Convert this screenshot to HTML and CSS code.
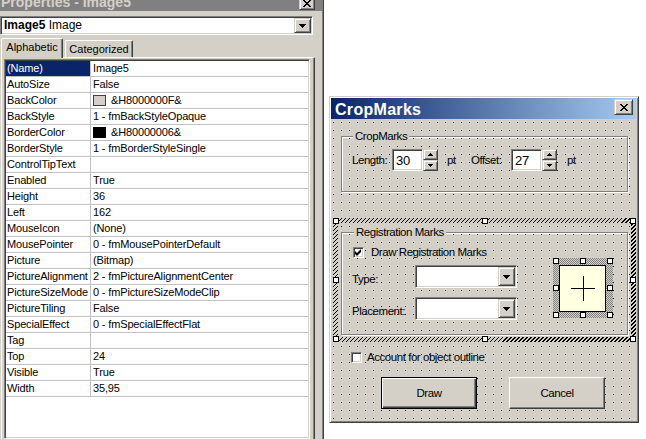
FILE: index.html
```html
<!DOCTYPE html>
<html>
<head>
<meta charset="utf-8">
<title>Properties - CropMarks</title>
<link rel="stylesheet" href="styles.css">
</head>
<body>
<div class="props">
  <div class="ptitle">
    <span class="ptitle-text">Properties - Image5</span>
    <span class="xbtn xsmall raised"><svg width="8" height="7" viewBox="0 0 8 7"><path d="M0 0h2v1H0zM6 0h2v1H6zM1 1h2v1H1zM5 1h2v1H5zM2 2h4v1H2zM3 3h2v1H3zM2 4h4v1H2zM1 5h2v1H1zM5 5h2v1H5zM0 6h2v1H0zM6 6h2v1H6z" fill="#000"/></svg></span>
  </div>
  <div class="pcombo sunken">
    <span class="pcombo-text"><b>Image5</b> Image</span>
    <span class="ddbtn raised"><svg width="7" height="4" viewBox="0 0 7 4"><path d="M0 0h7v1H6v1H5v1H4v1H3V3H2V2H1V1H0z" fill="#000"/></svg></span>
  </div>
  <div class="tabs">
    <div class="tab active">Alphabetic</div>
    <div class="tab">Categorized</div>
  </div>
  <div class="page">
    <div class="grid sunken">
      <div class="row cur"><div class="k">(Name)</div><div class="v">Image5</div></div>
      <div class="row"><div class="k">AutoSize</div><div class="v">False</div></div>
      <div class="row"><div class="k">BackColor</div><div class="v"><span class="sw sw-face"></span>&amp;H8000000F&amp;</div></div>
      <div class="row"><div class="k">BackStyle</div><div class="v">1 - fmBackStyleOpaque</div></div>
      <div class="row"><div class="k">BorderColor</div><div class="v"><span class="sw sw-black"></span>&amp;H80000006&amp;</div></div>
      <div class="row"><div class="k">BorderStyle</div><div class="v">1 - fmBorderStyleSingle</div></div>
      <div class="row"><div class="k">ControlTipText</div><div class="v"></div></div>
      <div class="row"><div class="k">Enabled</div><div class="v">True</div></div>
      <div class="row"><div class="k">Height</div><div class="v">36</div></div>
      <div class="row"><div class="k">Left</div><div class="v">162</div></div>
      <div class="row"><div class="k">MouseIcon</div><div class="v">(None)</div></div>
      <div class="row"><div class="k">MousePointer</div><div class="v">0 - fmMousePointerDefault</div></div>
      <div class="row"><div class="k">Picture</div><div class="v">(Bitmap)</div></div>
      <div class="row"><div class="k">PictureAlignment</div><div class="v">2 - fmPictureAlignmentCenter</div></div>
      <div class="row"><div class="k">PictureSizeMode</div><div class="v">0 - fmPictureSizeModeClip</div></div>
      <div class="row"><div class="k">PictureTiling</div><div class="v">False</div></div>
      <div class="row"><div class="k">SpecialEffect</div><div class="v">0 - fmSpecialEffectFlat</div></div>
      <div class="row"><div class="k">Tag</div><div class="v"></div></div>
      <div class="row"><div class="k">Top</div><div class="v">24</div></div>
      <div class="row"><div class="k">Visible</div><div class="v">True</div></div>
      <div class="row"><div class="k">Width</div><div class="v">35,95</div></div>
    </div>
  </div>
</div>

<div class="desk">
  <div class="win">
    <div class="wtitle">
      <span class="wtitle-text">CropMarks</span>
      <span class="xbtn xbig raised"><svg width="8" height="7" viewBox="0 0 8 7"><path d="M0 0h2v1H0zM6 0h2v1H6zM1 1h2v1H1zM5 1h2v1H5zM2 2h4v1H2zM3 3h2v1H3zM2 4h4v1H2zM1 5h2v1H1zM5 5h2v1H5zM0 6h2v1H0zM6 6h2v1H6z" fill="#000"/></svg></span>
    </div>
    <div class="client dots">
      <fieldset class="frame f1">
        <legend>CropMarks</legend>
        <div class="f1row">
          <span class="lbl w40">Length:</span>
          <span class="tb sunken">30</span>
          <span class="spin">
            <span class="sb raised"><svg width="5" height="3" viewBox="0 0 5 3"><path d="M2 0h1v1h1v1h1v1H0V2h1V1h1z" fill="#000"/></svg></span>
            <span class="sb raised"><svg width="5" height="3" viewBox="0 0 5 3"><path d="M0 0h5v1H4v1H3v1H2V2H1V1H0z" fill="#000"/></svg></span>
          </span>
          <span class="lbl pt1">pt</span>
          <span class="lbl w40">Offset:</span>
          <span class="tb sunken">27</span>
          <span class="spin">
            <span class="sb raised"><svg width="5" height="3" viewBox="0 0 5 3"><path d="M2 0h1v1h1v1h1v1H0V2h1V1h1z" fill="#000"/></svg></span>
            <span class="sb raised"><svg width="5" height="3" viewBox="0 0 5 3"><path d="M0 0h5v1H4v1H3v1H2V2H1V1H0z" fill="#000"/></svg></span>
          </span>
          <span class="lbl pt2">pt</span>
        </div>
      </fieldset>

      <div class="selbox">
        <div class="selin dots">
          <fieldset class="frame f2">
            <legend>Registration Marks</legend>
            <div class="f2body">
              <div class="f2left">
                <div class="chkrow">
                  <span class="chk sunken"><svg width="7" height="7" viewBox="0 0 7 7"><path d="M6 0v3L2 7 0 5V2l2 2z" fill="#000"/></svg></span>
                  <span class="chklbl">Draw Registration Marks</span>
                </div>
                <div class="frow r1">
                  <span class="lbl2">Type:</span>
                  <span class="fcombo sunken"><span class="ddbtn raised"><svg width="7" height="4" viewBox="0 0 7 4"><path d="M0 0h7v1H6v1H5v1H4v1H3V3H2V2H1V1H0z" fill="#000"/></svg></span></span>
                </div>
                <div class="frow r2">
                  <span class="lbl2">Placement:</span>
                  <span class="fcombo sunken"><span class="ddbtn raised"><svg width="7" height="4" viewBox="0 0 7 4"><path d="M0 0h7v1H6v1H5v1H4v1H3V3H2V2H1V1H0z" fill="#000"/></svg></span></span>
                </div>
              </div>
              <div class="imgsel">
                <div class="imgbox">
                  <svg width="24" height="25" viewBox="0 0 24 25"><path d="M0 12.5h24M12.5 0v25" stroke="#000" stroke-width="1"/></svg>
                </div>
                <span class="h i1"></span><span class="h i2"></span><span class="h i3"></span>
                <span class="h i4"></span><span class="h i5"></span>
                <span class="h i6"></span><span class="h i7"></span><span class="h i8"></span>
              </div>
            </div>
          </fieldset>
        </div>
        <span class="h s1"></span><span class="h s2"></span><span class="h s3"></span>
        <span class="h s4"></span><span class="h s5"></span>
        <span class="h s6"></span><span class="h s7"></span><span class="h s8"></span>
      </div>

      <div class="acct">
        <span class="chk sunken"></span>
        <span class="acctlbl">Account for object outline</span>
      </div>

      <div class="btns">
        <div class="btn def">Draw</div>
        <div class="btn normal">Cancel</div>
      </div>
    </div>
  </div>
</div>
</body>
</html>
```

FILE: styles.css
```css
* { box-sizing: border-box; }
html, body { margin: 0; padding: 0; }
body {
  width: 646px;
  height: 439px;
  overflow: hidden;
  background: #fff;
  display: flex;
  align-items: flex-start;
  font-family: "Liberation Sans", Arial, sans-serif;
  font-size: 11px;
  color: #000;
}

/* generic 3D looks */
.raised {
  background: #d4d0c8;
  border: 1px solid;
  border-color: #d4d0c8 #404040 #404040 #d4d0c8;
  box-shadow: inset 1px 1px #fff, inset -1px -1px #808080;
}
.sunken {
  background: #fff;
  border: 1px solid;
  border-color: #808080 #fff #fff #808080;
  box-shadow: inset 1px 1px #404040, inset -1px -1px #d4d0c8;
}
.dots {
  background-color: #d4d0c8;
  background-image: conic-gradient(from 90deg at 1px 1px, transparent 50%, #000 0 75%, transparent 0);
  background-size: 8px 8px;
  background-position: 5px 2px;
  background-attachment: fixed;
}

/* ---------- Properties window ---------- */
.props {
  flex: none;
  width: 324px;
  height: 439px;
  background: #d4d0c8;
  border-right: 1px solid #404040;
  box-shadow: inset -1px 0 #808080;
  display: flex;
  flex-direction: column;
}
.ptitle {
  flex: none;
  height: 18px;
  margin: -7px 1px 0 0;
  padding-left: 1px;
  background: #808080;
  color: #d4d0c8;
  font-weight: bold;
  font-size: 14px;
  line-height: 19px;
  display: flex;
  justify-content: space-between;
  align-items: flex-start;
  white-space: nowrap;
}
.xbtn {
  display: flex;
  align-items: center;
  justify-content: center;
  flex: none;
}
.xsmall { width: 16px; height: 14px; margin: 3px 7px 0 0; }
.xbig { width: 19px; height: 16px; margin: 1px 3px 0 0; }

.pcombo {
  flex: none;
  margin-top: 5px;
  width: 313px;
  height: 19px;
  padding: 1px;
  display: flex;
  justify-content: space-between;
}
.pcombo-text { padding-left: 2px; font-size: 12px; line-height: 15px; white-space: nowrap; }
.ddbtn {
  width: 17px;
  flex: none;
  display: flex;
  align-items: center;
  justify-content: center;
}

.tabs {
  flex: none;
  display: flex;
  align-items: flex-end;
  height: 19px;
  margin: 3px 0 0 1px;
  position: relative;
  z-index: 1;
}
.tab {
  width: 68px;
  height: 17px;
  margin-left: 2px;
  background: #d4d0c8;
  border: 1px solid;
  border-bottom: 0;
  border-color: #fff #404040 #fff #fff;
  box-shadow: inset -1px 0 #808080;
  border-radius: 2px 2px 0 0;
  text-align: center;
  line-height: 16px;
}
.tab.active {
  width: 62px;
  height: 20px;
  margin: 0 0 -1px 0;
}

.page {
  flex: 1;
  min-height: 0;
  width: 314px;
  margin-left: 1px;
  border-top: 1px solid #fff;
  border-left: 1px solid #fff;
  border-right: 1px solid #404040;
  box-shadow: inset -1px 0 #808080;
  padding: 1px 0 0 2px;
  display: flex;
  flex-direction: column;
}
.grid {
  flex: 1;
  width: 306px;
  padding: 1px;
  letter-spacing: -0.15px;
}
.row {
  display: flex;
  height: 16px;
  border-bottom: 1px solid #c0c0c0;
  line-height: 15px;
  white-space: nowrap;
}
.k {
  width: 85px;
  flex: none;
  border-right: 1px solid #c0c0c0;
  padding-left: 1px;
  overflow: hidden;
}
.v {
  flex: 1;
  padding-left: 2px;
  display: flex;
  align-items: center;
  overflow: hidden;
}
.row.cur .k { background: #0a246a; color: #fff; }
.sw {
  flex: none;
  width: 13px;
  height: 11px;
  border: 1px solid #000;
  margin-right: 5px;
}
.sw-face { background: #d4d0c8; border-color: #404040; }
.sw-black { background: #000; }

/* ---------- CropMarks form ---------- */
.desk { flex: none; padding: 96px 0 0 5px; }
.win {
  width: 310px;
  height: 327px;
  background: #d4d0c8;
  border: 1px solid;
  border-color: #d4d0c8 #404040 #404040 #d4d0c8;
  box-shadow: inset 1px 1px #fff, inset -1px -1px #808080;
  padding: 1px 2px 2px 1px;
  display: flex;
  flex-direction: column;
}
.wtitle {
  flex: none;
  height: 21px;
  padding: 2px 0 0 4px;
  background: linear-gradient(to right, #0a246a, #a6caf0);
  color: #fff;
  font-weight: bold;
  font-size: 16px;
  letter-spacing: 0.3px;
  line-height: 19px;
  display: flex;
  justify-content: space-between;
  align-items: flex-start;
}
.wtitle .xbig { margin-top: -1px; }

.client {
  height: 301px;
  display: flex;
  flex-direction: column;
  align-items: flex-start;
  font-family: "Liberation Sans", Arial, sans-serif;
  font-size: 11.5px;
  letter-spacing: -0.45px;
}

.frame {
  margin: 0;
  padding: 0;
  min-inline-size: 0;
  width: 287px;
  border: 1px solid #808080;
  box-shadow: 1px 1px #fff, inset 1px 1px #fff;
  background: transparent;
}
.frame legend {
  padding: 0 2px;
  line-height: 13px;
  background: #d4d0c8;
  white-space: nowrap;
}
.f1 { margin: 11px 0 0 10px; height: 62px; }
.f1 legend { margin-left: 11px; }
.f2 { margin: 3px 0 0 3px; height: 109px; }
.f2 legend { margin-left: 12px; }

.f1row {
  display: flex;
  align-items: center;
  height: 22px;
  margin: 6px 0 0 10px;
}
.lbl { flex: none; white-space: nowrap; }
.w40 { width: 40px; }
.pt1 { width: 24px; margin-left: 9px; }
.pt2 { margin-left: 10px; }
.tb {
  flex: none;
  width: 31px;
  height: 22px;
  padding: 1px 3px;
  font-size: 13px;
  letter-spacing: -0.2px;
  line-height: 19px;
}
.spin {
  flex: none;
  width: 15px;
  height: 22px;
  display: flex;
  flex-direction: column;
}
.sb {
  flex: 1;
  display: flex;
  align-items: center;
  justify-content: center;
}

.selbox {
  position: relative;
  margin: 26px 0 0 2px;
  width: 303px;
  height: 124px;
  padding: 5px;
  background: repeating-linear-gradient(135deg, #000 0 1.3px, #d4d0c8 1.3px 2.83px);
}
.selin {
  height: 100%;
  display: flex;
  align-items: flex-start;
}
.h {
  position: absolute;
  width: 6px;
  height: 6px;
  background: #fff;
  border: 1px solid #000;
}
.s1 { left: 0; top: 0; }
.s2 { left: 149px; top: 0; }
.s3 { left: 297px; top: 0; }
.s4 { left: 0; top: 59px; }
.s5 { left: 297px; top: 59px; }
.s6 { left: 0; top: 118px; }
.s7 { left: 149px; top: 118px; }
.s8 { left: 297px; top: 118px; }

.f2body { display: flex; align-items: flex-start; }
.f2left { width: 165px; margin: 8px 0 0 10px; flex: none; }
.chkrow { display: flex; align-items: center; height: 11px; margin-left: 1px; }
.chk {
  flex: none;
  width: 11px;
  height: 11px;
  display: flex;
  align-items: center;
  justify-content: center;
}
.chklbl { margin-left: 7px; white-space: nowrap; line-height: 11px; }
.frow { display: flex; align-items: flex-start; height: 23px; }
.r1 { margin-top: 7px; }
.r2 { margin-top: 9px; }
.lbl2 {
  width: 63px;
  height: 23px;
  flex: none;
  padding-top: 3px;
  line-height: 23px;
  white-space: nowrap;
}
.fcombo {
  width: 102px;
  height: 23px;
  padding: 1px;
  display: flex;
  justify-content: flex-end;
}

.imgsel {
  position: relative;
  flex: none;
  width: 60px;
  height: 60px;
  margin: 19px 0 0 36px;
  padding: 7px 7px 6px 6px;
  background: repeating-conic-gradient(#808080 0 25%, #d4d0c8 0 50%) 0 0 / 2px 2px;
}
.imgbox {
  width: 47px;
  height: 47px;
  background: #ffffe1;
  border: 1px solid #000;
  display: flex;
  align-items: center;
  justify-content: center;
}
.i1 { left: 0; top: 0; }
.i2 { left: 27px; top: 0; }
.i3 { left: 54px; top: 0; }
.i4 { left: 0; top: 27px; }
.i5 { left: 54px; top: 27px; }
.i6 { left: 0; top: 54px; }
.i7 { left: 27px; top: 54px; }
.i8 { left: 54px; top: 54px; }

.acct {
  display: flex;
  align-items: center;
  height: 11px;
  margin: 10px 0 0 20px;
}
.acctlbl { margin-left: 5px; line-height: 11px; white-space: nowrap; }

.btns {
  display: flex;
  gap: 32px;
  margin: 14px 0 0 50px;
}
.btn {
  width: 96px;
  height: 32px;
  display: flex;
  align-items: center;
  justify-content: center;
  background: #d4d0c8;
}
.btn.def {
  border: 1px solid #000;
  box-shadow: inset 1px 1px #fff, inset -1px -1px #404040, inset -2px -2px #808080;
}
.btn.normal {
  border: 1px solid;
  border-color: #fff #404040 #404040 #fff;
  box-shadow: inset -1px -1px #808080;
}
```
